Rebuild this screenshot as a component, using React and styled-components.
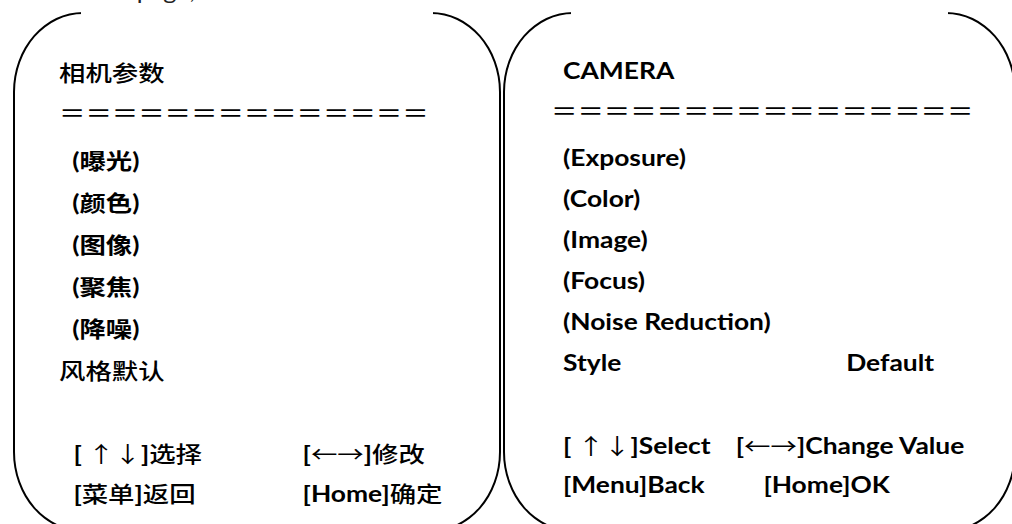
import React from "react";
import styled, { createGlobalStyle } from "styled-components";

const Global = createGlobalStyle`
  html, body { margin: 0; padding: 0; background: #fff; }
  body { width: 1012px; height: 524px; overflow: hidden; }
`;

const Page = styled.div`
  width: 1012px;
  height: 524px;
  overflow: hidden;
  background: #fff;
  color: #000;
  font-family: Lato, "Noto Sans CJK SC", sans-serif;
`;

const Caption = styled.div`
  height: 12px;
  overflow: hidden;
`;

const CaptionText = styled.div`
  margin-top: -21px;
  padding-left: 21px;
  font: 400 21px/24px Lato, "Noto Sans CJK SC", sans-serif;
  color: #222;
  white-space: nowrap;
  transform: scaleX(1.2);
  transform-origin: left top;
`;

const Panels = styled.div`
  display: flex;
  align-items: flex-start;
  gap: 2px;
  padding-left: 13px;
`;

const Panel = styled.section`
  position: relative;
  flex: none;
  box-sizing: border-box;
  width: ${(p) => p.$w}px;
  height: 520px;
  border: 2px solid #000;
  border-radius: 70px / 80px;
  padding: 37px 0 0 ${(p) => p.$pad}px;

  &::before {
    content: "";
    position: absolute;
    top: -3px;
    left: 66px;
    right: 66px;
    height: 6px;
    background: #fff;
  }
`;

const Content = styled.div`
  display: flex;
  flex-direction: column;
  width: max-content;
  transform: scaleX(1.2);
  transform-origin: left top;
`;

const Title = styled.div`
  font-size: 22px;
  line-height: 40px;
  font-weight: 700;
`;

const Han = styled.span`
  font-family: "Noto Sans CJK SC", sans-serif;
  font-weight: ${(p) => (p.$w ? p.$w : 500)};
`;

const Rule = styled.div`
  font-family: "Noto Sans CJK SC", sans-serif;
  font-weight: 500;
  font-size: 22px;
  line-height: 36px;
  margin: 0 0 10px ${(p) => p.$shift || 0}px;
  white-space: nowrap;
`;

const Item = styled.div`
  font-size: 22px;
  font-weight: 700;
  line-height: 41px;
  padding-left: ${(p) => p.$indent || 0}px;
  white-space: nowrap;
`;

const SettingRow = styled.div`
  display: grid;
  grid-template-columns: ${(p) => p.$col}px auto;
  font-size: 22px;
  font-weight: 700;
  line-height: 41px;
  white-space: nowrap;
`;

const Footer = styled.div`
  margin-top: ${(p) => p.$top}px;
  padding-left: ${(p) => p.$indent || 0}px;
  display: flex;
  flex-direction: column;
`;

const HintRow = styled.div`
  display: grid;
  grid-template-columns: ${(p) => p.$col}px auto;
  font-size: 22px;
  font-weight: 700;
  line-height: 39px;
  white-space: nowrap;
`;

const Arrow = styled.span`
  font-family: "Noto Sans CJK SC", sans-serif;
  font-weight: 400;
`;

const EQ = (n) => "＝".repeat(n);

export default function App() {
  return (
    <Page>
      <Global />
      <Caption>
        <CaptionText>the menu page, as shown below:</CaptionText>
      </Caption>
      <Panels>
        <Panel $w={488} $pad={44}>
          <Content>
            <Title>
              <Han $w={500}>相机参数</Han>
            </Title>
            <Rule>{EQ(14)}</Rule>
            <Item $indent={11}>
              (<Han $w={700}>曝光</Han>)
            </Item>
            <Item $indent={11}>
              (<Han $w={700}>颜色</Han>)
            </Item>
            <Item $indent={11}>
              (<Han $w={700}>图像</Han>)
            </Item>
            <Item $indent={11}>
              (<Han $w={700}>聚焦</Han>)
            </Item>
            <Item $indent={11}>
              (<Han $w={700}>降噪</Han>)
            </Item>
            <Item>
              <Han $w={500}>风格默认</Han>
            </Item>
            <Footer $top={42} $indent={12}>
              <HintRow $col={191}>
                <span>
                  [ <Arrow>↑↓</Arrow>]<Han>选择</Han>
                </span>
                <span>
                  [<Arrow>←→</Arrow>]<Han>修改</Han>
                </span>
              </HintRow>
              <HintRow $col={191}>
                <span>
                  [<Han>菜单</Han>]<Han>返回</Han>
                </span>
                <span>
                  [Home]<Han>确定</Han>
                </span>
              </HintRow>
            </Footer>
          </Content>
        </Panel>
        <Panel $w={513} $pad={58}>
          <Content>
            <Title>CAMERA</Title>
            <Rule $shift={-10}>{EQ(16)}</Rule>
            <Item>(Exposure)</Item>
            <Item>(Color)</Item>
            <Item>(Image)</Item>
            <Item>(Focus)</Item>
            <Item>(Noise Reduction)</Item>
            <SettingRow $col={236}>
              <span>Style</span>
              <span>Default</span>
            </SettingRow>
            <Footer $top={42}>
              <HintRow $col={144}>
                <span>
                  [ <Arrow>↑↓</Arrow>]Select
                </span>
                <span>
                  [<Arrow>←→</Arrow>]Change Value
                </span>
              </HintRow>
              <HintRow $col={167}>
                <span>[Menu]Back</span>
                <span>[Home]OK</span>
              </HintRow>
            </Footer>
          </Content>
        </Panel>
      </Panels>
    </Page>
  );
}
